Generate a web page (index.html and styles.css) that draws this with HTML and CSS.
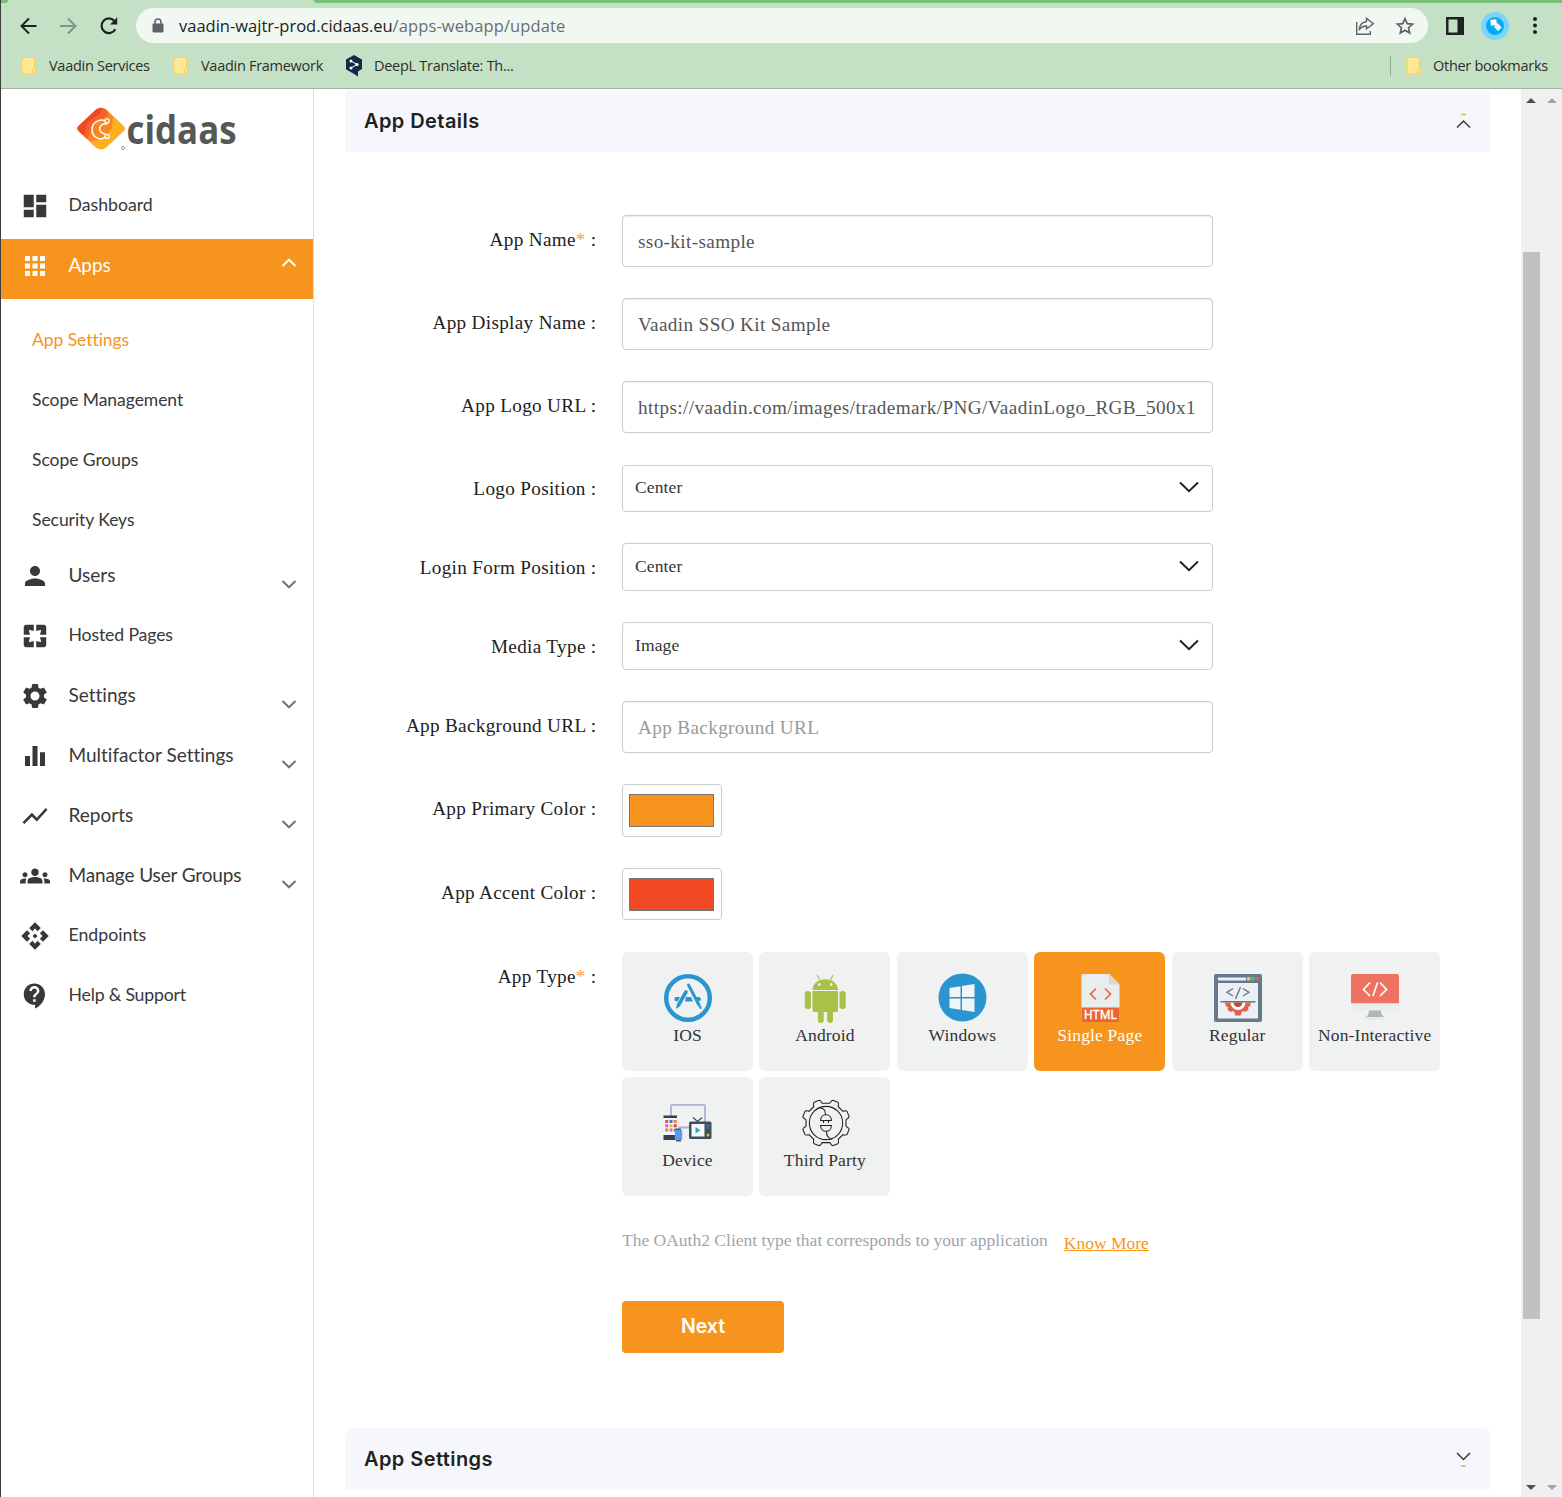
FILE: index.html
```html
<!DOCTYPE html>
<html lang="en">
<head>
<meta charset="utf-8">
<title>cidaas - App Settings</title>
<link rel="stylesheet" href="styles.css">
</head>
<body>
<header class="browser">
  <div class="tab-strip"><span class="tab-left"></span><span class="tab-right"></span></div>
  <div class="toolbar">
    <svg class="tool" width="18" height="18" viewBox="0 0 18 18" fill="none" stroke="#202124" stroke-width="2"><path d="M17.500 9H2.500M10 1.500L2.500 9 10 16.500"/></svg>
    <svg class="tool forward" width="18" height="18" viewBox="0 0 18 18" fill="none" stroke="#80957f" stroke-width="2"><path d="M1 9h15M9 1.500L16.500 9 9 16.500"/></svg>
    <svg class="tool reload" width="20" height="20" viewBox="0 0 20 20"><path d="M16.300 13.200A7.300 7.300 0 1 1 15.300 4.900" fill="none" stroke="#202124" stroke-width="2.200"/><path d="M18.200 1.200v7.200H11z" fill="#202124"/></svg>
    <div class="omnibox">
      <svg width="12" height="16" viewBox="0 0 12 16"><path d="M3 6V4a3 3 0 0 1 6 0v2" fill="none" stroke="#5f6368" stroke-width="1.600"/><rect x=".5" y="5.500" width="11" height="9" rx="1.300" fill="#5f6368"/></svg>
      <span class="url"><span>vaadin-wajtr-prod.cidaas.eu</span><span class="url-path">/apps-webapp/update</span></span>
      <svg class="share" width="20" height="20" viewBox="0 0 20 20" fill="none" stroke="#5f6368" stroke-width="1.400"><path d="M1.700 6v12.300h13.600V15"/><path d="M11.500 2.300L18.300 7.800 11.500 12.800V10C8 10 6 11 4 14c.6-5 3.300-8 7.500-8.500z"/></svg>
      <svg width="20" height="20" viewBox="0 0 20 20" fill="none" stroke="#5f6368" stroke-width="1.700"><path d="M10 2.600l2.200 5 5.400.5-4.100 3.600 1.200 5.300-4.700-2.800L5.300 17l1.200-5.300L2.400 8.100l5.400-.5z"/></svg>
    </div>
    <svg class="side-panel" width="18" height="18" viewBox="0 0 18 18"><path d="M0 0h18v18H0z" fill="#202124"/><path d="M2.500 2.500h9v13h-9z" fill="#c5e1c5"/></svg>
    <svg class="profile" width="28" height="28" viewBox="0 0 28 28"><circle cx="14" cy="14" r="14" fill="#7bd5fb"/><circle cx="14" cy="14" r="9" fill="#06a9f4"/><path d="M9.300 8l6-.8.7 5.800-6 .7z" fill="#fff"/><path d="M13 14.700l3.700-3.700 4 4.500-3.700 3.700z" fill="#e4f4fc"/></svg>
    <svg class="kebab" width="6" height="18" viewBox="0 0 6 18" fill="#202124"><circle cx="3" cy="2" r="2"/><circle cx="3" cy="8.500" r="2"/><circle cx="3" cy="15" r="2"/></svg>
  </div>
  <div class="bookmarks">
    <svg class="folder" width="17" height="20" viewBox="0 0 17 20"><path d="M1 1.500h12.500v11.500h1v5H1z" fill="#ffe794" stroke="#f8d45c" stroke-width="1.200"/><path d="M11.500 18v-5h3v4.500z" fill="#ffe794" stroke="#f8d45c"/></svg>
    <span class="bm bm-1">Vaadin Services</span>
    <svg class="folder" width="17" height="20" viewBox="0 0 17 20"><path d="M1 1.500h12.500v11.500h1v5H1z" fill="#ffe794" stroke="#f8d45c" stroke-width="1.200"/><path d="M11.500 18v-5h3v4.500z" fill="#ffe794" stroke="#f8d45c"/></svg>
    <span class="bm bm-2">Vaadin Framework</span>
    <svg class="deepl" width="16" height="23" viewBox="0 0 16 23"><path d="M8 1l8 4.500v9.500l-4 2.500v5L8 20 0 15.300V5.500z" fill="#0f2b46"/><path d="M5 7l6 3.500L5 14" fill="none" stroke="#fff" stroke-width="1"/><circle cx="5" cy="7" r="1.500" fill="#fff"/><circle cx="11" cy="10.500" r="1.600" fill="#fff"/><circle cx="5" cy="14" r="1.500" fill="#fff"/></svg>
    <span class="bm bm-3">DeepL Translate: Th...</span>
    <span class="divider"></span>
    <svg class="folder" width="17" height="20" viewBox="0 0 17 20"><path d="M1 1.500h12.500v11.500h1v5H1z" fill="#ffe794" stroke="#f8d45c" stroke-width="1.200"/><path d="M11.500 18v-5h3v4.500z" fill="#ffe794" stroke="#f8d45c"/></svg>
    <span class="bm bm-4">Other bookmarks</span>
  </div>
</header>

<div class="page">
  <nav class="sidebar">
    <svg class="logo" width="164" height="46" viewBox="0 0 164 46">
      <defs><clipPath id="gem"><path d="M20 3.500Q25 0 30 3.500L47 19.500Q50.500 22.500 47 25.500L30 41.500Q25 45 20 41.500L3 25.500Q-.5 22.500 3 19.500z"/></clipPath></defs>
      <g clip-path="url(#gem)"><path d="M0 0h50v46H0z" fill="#f9861f"/><path d="M0 0h27l-2 7-9 9-4 12-6 8-6-8z" fill="#f04a23"/><path d="M27 0l8 0-4 10-14 8-5 14-6 4 6-20 13-9z" fill="#f2652a"/><path d="M37 9l14 14-26 24-13-11 10-2 8-4 6-8z" fill="#fdb01f"/></g>
      <path d="M29 15.500c-3-3-13-.5-13 8s9 11.500 13 7.500" fill="none" stroke="#fff" stroke-width="1.500"/>
      <path d="M31.500 18c-9-2-11 9-2 10" fill="none" stroke="#fff" stroke-width="1.500"/><circle cx="31" cy="15" r="2.100" fill="none" stroke="#fff" stroke-width="1.300"/><circle cx="31" cy="30.500" r="2.100" fill="none" stroke="#fff" stroke-width="1.300"/>
      <circle cx="47" cy="42" r="1.500" fill="none" stroke="#999"/>
      <text x="50.500" y="38" textLength="110" lengthAdjust="spacingAndGlyphs" class="logo-text">cidaas</text>
    </svg>
    <a class="item small"><svg class="ico" viewBox="0 0 24 24"><path d="M3 13h8V3H3v10zm0 8h8v-6H3v6zm10 0h8V11h-8v10zm0-18v6h8V3h-8z"/></svg><span>Dashboard</span></a>
    <a class="item active"><svg class="ico" viewBox="0 0 24 24"><path d="M4 8h4V4H4v4zm6 12h4v-4h-4v4zm-6 0h4v-4H4v4zm0-6h4v-4H4v4zm6 0h4v-4h-4v4zm6-10v4h4V4h-4zm-6 4h4V4h-4v4zm6 6h4v-4h-4v4zm0 6h4v-4h-4v4z"/></svg><span>Apps</span><svg class="chev up" viewBox="0 0 16 10"><path d="M1.500 8L8 1.700 14.500 8"/></svg></a>
    <div class="subnav">
      <a class="current"><span>App Settings</span></a>
      <a><span>Scope Management</span></a>
      <a><span>Scope Groups</span></a>
      <a><span>Security Keys</span></a>
    </div>
    <a class="item"><svg class="ico" viewBox="0 0 24 24"><path d="M12 12c2.210 0 4-1.790 4-4s-1.790-4-4-4-4 1.790-4 4 1.790 4 4 4zm0 2c-2.670 0-8 1.340-8 4v2h16v-2c0-2.660-5.330-4-8-4z"/></svg><span>Users</span><svg class="chev" viewBox="0 0 16 10"><path d="M1.500 2L8 8.300 14.500 2"/></svg></a>
    <a class="item small hosted"><svg class="ico" viewBox="0 0 24 24"><path d="M3 5v6h5L7 7l4 1V3H5c-1.100 0-2 .9-2 2zm5 8H3v6c0 1.100.9 2 2 2h6v-5l-4 1 1-4zm9 4l-4-1v5h6c1.100 0 2-.9 2-2v-6h-5l1 4zm2-14h-6v5l4-1-1 4h5V5c0-1.100-.9-2-2-2z"/></svg><span>Hosted Pages</span></a>
    <a class="item"><svg class="ico" viewBox="0 0 24 24"><path d="M19.140 12.940c.04-.3.060-.61.060-.94 0-.32-.02-.64-.07-.94l2.030-1.580c.18-.14.230-.41.120-.61l-1.920-3.320c-.12-.22-.37-.29-.59-.22l-2.390.96c-.5-.38-1.030-.7-1.620-.94l-.36-2.540c-.04-.24-.24-.41-.48-.41h-3.840c-.24 0-.43.170-.47.410l-.36 2.540c-.59.240-1.130.570-1.620.94l-2.390-.96c-.22-.08-.47 0-.59.220L2.740 8.870c-.12.210-.08.470.12.610l2.030 1.580c-.05.3-.09.630-.09.940s.02.640.070.940l-2.030 1.580c-.18.140-.23.410-.12.610l1.920 3.320c.12.220.37.290.59.220l2.390-.96c.5.380 1.030.7 1.620.94l.36 2.540c.05.240.24.410.48.410h3.840c.24 0 .44-.17.470-.41l.36-2.540c.59-.24 1.130-.56 1.620-.94l2.390.96c.22.080.47 0 .59-.22l1.920-3.320c.12-.22.070-.47-.12-.61l-2.010-1.580zM12 15.600c-1.980 0-3.600-1.620-3.600-3.600s1.620-3.600 3.600-3.600 3.600 1.620 3.600 3.600-1.620 3.600-3.600 3.600z"/></svg><span>Settings</span><svg class="chev" viewBox="0 0 16 10"><path d="M1.500 2L8 8.300 14.500 2"/></svg></a>
    <a class="item"><svg class="ico" viewBox="0 0 24 24"><path d="M10 20h4V4h-4v16zm-6 0h4v-8H4v8zM16 9v11h4V9h-4z"/></svg><span>Multifactor Settings</span><svg class="chev" viewBox="0 0 16 10"><path d="M1.500 2L8 8.300 14.500 2"/></svg></a>
    <a class="item"><svg class="ico" viewBox="0 0 24 24"><path d="M3.500 18.490l6-6.010 4 4L22 6.920l-1.410-1.410-7.090 7.970-4-4L2 16.990z"/></svg><span>Reports</span><svg class="chev" viewBox="0 0 16 10"><path d="M1.500 2L8 8.300 14.500 2"/></svg></a>
    <a class="item groups"><svg class="ico" viewBox="0 0 24 24"><path d="M12 12.750c1.630 0 3.070.39 4.240.9 1.080.48 1.760 1.560 1.760 2.730V18H6v-1.610c0-1.180.68-2.260 1.760-2.730 1.170-.52 2.610-.91 4.240-.91zM4 13c1.100 0 2-.9 2-2s-.9-2-2-2-2 .9-2 2 .9 2 2 2zm1.130 1.100c-.37-.06-.74-.1-1.130-.1-.99 0-1.930.21-2.780.58C.48 14.900 0 15.620 0 16.430V18h4.500v-1.610c0-.83.23-1.610.63-2.290zM20 13c1.100 0 2-.9 2-2s-.9-2-2-2-2 .9-2 2 .9 2 2 2zm4 3.430c0-.81-.48-1.530-1.220-1.850-.85-.37-1.790-.58-2.780-.58-.39 0-.76.040-1.130.1.400.68.630 1.460.63 2.290V18H24v-1.570zM12 6c1.660 0 3 1.340 3 3s-1.340 3-3 3-3-1.340-3-3 1.340-3 3-3z"/></svg><span>Manage User Groups</span><svg class="chev" viewBox="0 0 16 10"><path d="M1.500 2L8 8.300 14.500 2"/></svg></a>
    <a class="item small"><svg class="ico" viewBox="0 0 24 24"><path d="M14 12l-2 2-2-2 2-2 2 2zm-2-6l2.120 2.120 2.500-2.500L12 1 7.380 5.620l2.500 2.500L12 6zm-6 6l2.120-2.120-2.500-2.500L1 12l4.620 4.620 2.500-2.500L6 12zm12 0l-2.120 2.120 2.500 2.500L23 12l-4.620-4.620-2.500 2.500L18 12zm-6 6l-2.120-2.120-2.500 2.500L12 23l4.620-4.620-2.500-2.500L12 18z"/></svg><span>Endpoints</span></a>
    <a class="item small help"><svg class="ico" viewBox="0 0 24 24"><path d="M11.500 2C6.810 2 3 5.810 3 10.500S6.810 19 11.500 19h.5v3c4.860-2.340 8-7 8-11.500C20 5.810 16.190 2 11.500 2zm1 14.500h-2v-2h2v2zm0-3.500h-2c0-3.250 3-3 3-5 0-1.100-.9-2-2-2s-2 .9-2 2h-2c0-2.210 1.790-4 4-4s4 1.790 4 4c0 2.500-3 2.750-3 5z"/></svg><span>Help &amp; Support</span></a>
  </nav>

  <main class="content">
    <section class="panel-head">
      <h2>App Details</h2>
      <svg width="16" height="18" viewBox="0 0 16 18" fill="none"><path d="M5 2.500h5" stroke="#b4d253" stroke-width="1.600"/><path d="M1 15.500L7.500 9 14 15.500" stroke="#3a3a3a" stroke-width="1.500"/></svg>
    </section>
    <form class="form">
      <div class="row"><label>App Name<i>*</i> :</label><div class="field">sso-kit-sample</div></div>
      <div class="row"><label>App Display Name :</label><div class="field">Vaadin SSO Kit Sample</div></div>
      <div class="row"><label>App Logo URL :</label><div class="field"><div class="clip"><span>https://vaadin.com/images/trademark/PNG/VaadinLogo_RGB_500x155.png</span></div></div></div>
      <div class="row select-row first"><label>Logo Position :</label><div class="field select"><span>Center</span><svg width="20" height="12" viewBox="0 0 20 12"><path d="M1 1.500l9 8.700 9-8.700"/></svg></div></div>
      <div class="row select-row"><label>Login Form Position :</label><div class="field select"><span>Center</span><svg width="20" height="12" viewBox="0 0 20 12"><path d="M1 1.500l9 8.700 9-8.700"/></svg></div></div>
      <div class="row select-row"><label>Media Type :</label><div class="field select"><span>Image</span><svg width="20" height="12" viewBox="0 0 20 12"><path d="M1 1.500l9 8.700 9-8.700"/></svg></div></div>
      <div class="row"><label>App Background URL :</label><div class="field placeholder">App Background URL</div></div>
      <div class="row color-row"><label>App Primary Color :</label><div class="field swatch tall"><b class="primary"></b></div></div>
      <div class="row color-row"><label>App Accent Color :</label><div class="field swatch"><b class="accent"></b></div></div>
      <div class="row type-row"><label>App Type<i>*</i> :</label>
        <div class="tiles">
          <div class="tile"><svg viewBox="0 0 48 48"><circle cx="24" cy="24" r="21.800" fill="none" stroke="#2a95d0" stroke-width="4.400"/><g stroke="#2a95d0" stroke-linecap="round" fill="none"><path d="M22 18l-7.500 13" stroke-width="3.600"/><path d="M24.500 11L35 31" stroke-width="3"/><path d="M13 33.500l.7-1.200M36 32.500l.7 1.500" stroke-width="2"/></g><path d="M11 23h5l-2.500 4.500H13q-2.500 0-2.500-2zM22 23h5l2 4.500h-8zM32 23h3.500q2 1.500 1.500 3.500l-2.500.5z" fill="#2a95d0"/></svg><span>IOS</span></div>
          <div class="tile"><svg viewBox="0 0 48 48" fill="#a9c146"><path d="M11.500 16C11.500 1.500 37 1.500 37 16z"/><path d="M11.500 17H37v19.500q0 1.500-2 1.500h-3v8a2.900 2.900 0 0 1-5.800 0v-8h-3.500v8a2.900 2.900 0 0 1-5.800 0v-8h-3.400q-2 0-2-1.500z"/><rect x="3.800" y="17" width="6.200" height="18" rx="3.100"/><rect x="38.500" y="17" width="6.200" height="18" rx="3.100"/><path d="M19 6l-3-5M29.500 6l2.500-5" stroke="#a9c146" stroke-width="1.100"/><circle cx="18.300" cy="10.500" r="1.200" fill="#fff"/><circle cx="30.200" cy="10.500" r="1.200" fill="#fff"/></svg><span>Android</span></div>
          <div class="tile"><svg viewBox="0 0 48 48"><circle cx="24.500" cy="23.500" r="24" fill="#2a95d0"/><path d="M11.500 14l11-1.700V23h-11zM24 12l12.500-2v13H24zM11.500 24.500h11v11.200l-11-1.700zM24 24.500h12.500V38L24 36z" fill="#f2f5f5"/></svg><span>Windows</span></div>
          <div class="tile selected"><svg class="nudge" viewBox="0 0 48 48"><path d="M7 0h26.500l10 10.500V48H7q-1.500 0-1.500-1.500v-45Q5.500 0 7 0z" fill="#e9edee"/><path d="M33 0l10.500 10.500H33z" fill="#d8d8cb"/><path d="M5.500 33.500h38V48h-38z" fill="#ea6530"/><path d="M20 14.500l-5.500 5.500 5.500 5.500M29 14.500l5.500 5.500-5.500 5.500" fill="none" stroke="#ea6530" stroke-width="1.700"/><text x="8" y="45.200" textLength="33" class="html-text">HTML</text></svg><span>Single Page</span></div>
          <div class="tile"><svg class="nudge" viewBox="0 0 48 48"><rect width="48" height="48" rx="2" fill="#64798a"/><path d="M4 3.500h28v3H4zM4 9h40v35.500H4z" fill="#eceff3"/><path d="M33 3h3.500v3.500H33z" fill="#f0c94d"/><path d="M37.200 3h3.500v3.500h-3.500z" fill="#4fba93"/><path d="M41.500 3H45v3.500h-3.500z" fill="#e5614f"/><path d="M11 28.500h26l-1 4-2 .5.500 3-3.500 2-2-1-1.500 1.500-.8 3h-5.400l-.8-3L19 37l-2 1-3.500-2 .5-3-2-.5z" fill="#e5614f"/><path d="M16.500 28.500h15a7.500 7.500 0 0 1-15 0z" fill="#fff"/><path d="M19.500 28.500h9a4.500 4.500 0 0 1-9 0z" fill="#c74738"/><path d="M6.500 27.800h35" stroke="#64798a" stroke-width="1.400"/><path d="M19 14.500l-6 3.800 6 3.700M29 14.500l6 3.800-6 3.700M26.500 13l-5 12" fill="none" stroke="#64798a" stroke-width="1.400"/></svg><span>Regular</span></div>
          <div class="tile"><svg class="nudge" viewBox="0 0 48 48"><path d="M2 0h44q2 0 2 2v27.500H0V2Q0 0 2 0z" fill="#ee7161"/><path d="M0 29.500h48V34q0 2.500-2 2.500H2Q0 36.500 0 34z" fill="#e8edee"/><path d="M18 36.500h12q0 4 3 6.500H15q3-2.500 3-6.500z" fill="#b0b5bb"/><path d="M14 43h20v3H14z" fill="#e5ecf0"/><path d="M19 8.500L12.500 15.500 19 22M29 8.500l6.500 7-6.500 6.500M26.500 8.500l-4.500 13.500" fill="none" stroke="#fff" stroke-width="1.700"/></svg><span>Non-Interactive</span></div>
          <div class="tile"><svg viewBox="0 0 48 48"><g transform="translate(-.5 1)"><path d="M7.500 17V6q0-1.200 1.200-1.200h31.600q1.200 0 1.200 1.200v17M15 27.500h12" fill="none" stroke="#a9b4d5" stroke-width="1.800"/><path d="M0 17h13.500v23H0z" fill="#f4f5f8"/><path d="M0 15.500h13.500V18H0zM0 35h13.500v5H0z" fill="#35404e"/><path d="M1.700 20h3v3h-3z" fill="#ef4b50"/><path d="M6 20h3v3H6z" fill="#3b7bd4"/><path d="M10.200 20h3v3h-3z" fill="#ef7a3d"/><path d="M1.700 24.300h3v3h-3z" fill="#b36be0"/><path d="M6 24.300h3v3H6z" fill="#f5b535"/><path d="M10.200 24.300h3v3h-3z" fill="#df3c50"/><path d="M1.700 28.500h3v3h-3z" fill="#ef7a3d"/><path d="M6 28.500h3v3H6z" fill="#c577cc"/><path d="M10.200 28.500h3v3h-3z" fill="#3b9f76"/><path d="M12.500 28.500h5v13h-5z" fill="#4b5563"/><rect x="11.300" y="30" width="7.400" height="10" rx="1" fill="#5a9bf0"/><path d="M29.500 17.500l4.500 4 4.500-4" fill="none" stroke="#39505e" stroke-width="1.300"/><rect x="25.500" y="21.500" width="22.500" height="17.500" rx="1.500" fill="#39505e"/><rect x="28" y="24" width="13" height="12.500" fill="#f7f7f7"/><path d="M32 27l5 3.200-5 3.300z" fill="#22a7d8"/><path d="M43 25.500h3M43 28h3" stroke="#6c8290"/><circle cx="44.500" cy="35" r="1.500" fill="#f1b544"/></g></svg><span>Device</span></div>
          <div class="tile"><svg class="gear" viewBox="-.5 -.5 49 49" fill="none" stroke="#222" stroke-width="1.100"><path d="M20 3.800h8c1-1 1-3.200 3-3.100l5 2.100c1.700 1 .4 2.900.5 4.600l4.600 4.500c1.700.1 3.600-1.200 4.500.5l2 5c.1 2-2.400 2-3.200 3.300v6.600c.8 1.200 3.300 1.200 3.200 3.200l-2 5c-1 1.700-2.900.4-4.500.5l-4.600 4.600c-.1 1.600 1.200 3.500-.5 4.500l-5 2c-2 .1-2-2-3-3.100h-8c-1 1.100-1 3.200-3 3.100l-5-2c-1.700-1-.4-2.900-.5-4.500l-4.600-4.600c-1.600-.1-3.500 1.200-4.500-.5l-2-5c-.1-2 2.400-2 3.200-3.200v-6.600C2.800 19.400.3 19.400.4 17.400l2-5c1-1.700 2.900-.4 4.500-.5l4.600-4.500c.1-1.700-1.200-3.600.5-4.600l5-2.100c2-.1 2 2.100 3 3.100z"/><circle cx="24" cy="24" r="17"/><path d="M17 8.500c5 0 6.500 3 6.500 7M24.500 33c0 4 1.500 6.500 5.500 7.500M18.500 21.500c0-8 11-8 11 0zM18.500 26.500c0 8 11 8 11 0zM21.500 21.500V24M26.500 21.500V24"/></svg><span>Third Party</span></div>
        </div>
      </div>
      <div class="hint"><span>The OAuth2 Client type that corresponds to your application</span><a>Know More</a></div>
      <button type="button" class="next">Next</button>
    </form>
    <section class="panel-head lower">
      <h2>App Settings</h2>
      <svg width="16" height="18" viewBox="0 0 16 18" fill="none"><path d="M5 16h5" stroke="#b4d253" stroke-width="1.600"/><path d="M1 3l6.500 6.500L14 3" stroke="#3a3a3a" stroke-width="1.500"/></svg>
    </section>
  </main>

  <aside class="scrollbars">
    <div class="track"><svg viewBox="0 0 10 5" fill="#505050"><path d="M0 5l5-5 5 5z"/></svg><span class="thumb"></span><svg viewBox="0 0 10 5" fill="#505050"><path d="M0 0l5 5 5-5z"/></svg></div>
    <div class="track idle"><svg viewBox="0 0 10 5" fill="#a3a3a3"><path d="M0 5l5-5 5 5z"/></svg><svg viewBox="0 0 10 5" fill="#a3a3a3"><path d="M0 0l5 5 5-5z"/></svg></div>
  </aside>
</div>
</body>
</html>
```
FILE: styles.css
```css
* { box-sizing: border-box; }
body {
  margin: 0;
  height: 1497px;
  overflow: hidden;
  display: flex;
  flex-direction: column;
  border-left: 1px solid #3c3c3c;
  background: #fff;
  color: #222;
  font-family: "Liberation Serif", serif;
}
svg { display: block; flex: none; }
span, h2, label, a { white-space: nowrap; }

/* browser chrome */
.browser {
  height: 89px;
  flex: none;
  background: #c5e1c5;
  border-bottom: 1px solid #9fb59f;
  font-family: "Open Sans", sans-serif;
}
.tab-strip { height: 3px; display: flex; justify-content: space-between; }
.tab-left { width: 7px; background: #79bd7b; border-bottom-right-radius: 6px; }
.tab-right { width: 1248px; background: #79bd7b; border-bottom-left-radius: 6px; }
.toolbar { height: 45px; display: flex; align-items: center; padding-left: 18px; }
.forward { margin-left: 22px; }
.reload { margin-left: 22px; }
.omnibox {
  width: 1292px;
  height: 35px;
  margin-left: 17px;
  padding: 0 13px 0 16px;
  display: flex;
  align-items: center;
  border-radius: 18px;
  background: #f1f8f1;
}
.url { margin-left: 15px; font-size: 16.5px; line-height: 24px; color: #202124; display: flex; }
.url-path { color: #6a6e71; letter-spacing: .1px; }
.share { margin: 0 20px 0 auto; }
.side-panel { margin-left: 18px; }
.profile { margin-left: 17px; }
.kebab { margin-left: 23px; }
.bookmarks { height: 35px; display: flex; align-items: center; padding: 0 13px 0 20px; }
.bm { font-size: 14.5px; line-height: 20px; letter-spacing: -.28px; color: #2b2f2b; }
.bm-1 { margin: 0 22px 0 11px; width: 102px; }
.bm-2 { margin: 0 22px 0 11px; width: 123px; }
.bm-3 { margin-left: 12px; }
.bm-4 { margin-left: 10px; width: 116px; }
.divider { width: 1px; height: 20px; margin: 0 15px 0 auto; background: #93ad93; }

.page { flex: 1; display: flex; min-height: 0; }

/* navigation */
.sidebar {
  width: 313px;
  flex: none;
  border-right: 1px solid #dcdcdc;
  font-family: Lato, sans-serif;
  font-variant-ligatures: none;
  color: #383838;
}
.logo { margin: 17px 0 27px 75px; overflow: visible; }
.logo-text { font: 700 39px "Open Sans", sans-serif; fill: #575756; }
.item { height: 60px; display: flex; align-items: flex-start; padding: 12px 16px 0 19px; font-size: 19px; line-height: 28px; }
.small { font-size: 17.7px; line-height: 27px; }
.hosted { letter-spacing: -.15px; }
.groups { letter-spacing: -.12px; }
.help { letter-spacing: -.2px; }
.ico { width: 30px; height: 30px; fill: #383838; margin-right: 18.500px; }
.chev { width: 16px; height: 10px; margin: 18px 0 0 auto; fill: none; stroke: #737373; stroke-width: 2; }
.chev.up { margin-top: 7px; stroke: #fff; }
.item.active { background: #f7941e; color: #fff; }
.item.active .ico { fill: #fff; }
.subnav { height: 250px; padding: 11px 0 0 31px; }
.subnav a { height: 60px; display: flex; align-items: center; font-size: 17.5px; line-height: 24px; letter-spacing: -.05px; }
.subnav .current { color: #f7941e; }

/* main column */
.content { flex: 1; padding: 1px 31px 0 31px; }
.panel-head {
  height: 62px;
  padding: 0 18px 0 19px;
  display: flex;
  align-items: center;
  justify-content: space-between;
  background: #f6f7fd;
  border-radius: 6px 6px 0 0;
}
.panel-head h2 { margin: 0; font: 600 20px/24px Inter, sans-serif; letter-spacing: .42px; color: #212121; }
.form { padding-top: 63px; height: 1276px; display: flex; flex-direction: column; align-items: flex-start; }
.row { height: 83px; flex: none; display: flex; align-items: flex-start; }
.row label {
  width: 277px;
  padding: 13px 25.5px 0 0;
  text-align: right;
  font-size: 19.2px;
  line-height: 24px;
  letter-spacing: .32px;
  color: #212121;
}
.row label i { font-style: normal; color: #f9a13a; }
.field {
  width: 591px;
  height: 52px;
  padding: 2px 15px 0;
  display: flex;
  align-items: center;
  border: 1px solid #ccc;
  border-radius: 4px;
  box-shadow: inset 0 1px 1px rgba(0, 0, 0, .075);
  font-size: 19.2px;
  line-height: 24px;
  letter-spacing: .36px;
  color: #555;
}
.clip { width: 559px; overflow: hidden; letter-spacing: .39px; }
.placeholder { color: #999; }
.select-row { height: 79px; }
.select { height: 48px; padding: 0 13px 2px 12px; justify-content: space-between; box-shadow: none; font-size: 17.5px; letter-spacing: .12px; color: #333; }
.select svg { fill: none; stroke: #222; stroke-width: 2; }
.first .select { height: 47px; margin-top: 1px; padding-bottom: 3px; }
.color-row { height: 84px; }
.swatch { width: 100px; padding: 1px 6px 0; box-shadow: none; }
.tall { height: 53px; padding-top: 0; }
.swatch b { width: 85px; height: 33px; border: 1px solid #767676; }
.primary { background: #f7941e; }
.accent { background: #f04923; }
.type-row { height: 244px; }
.tiles { display: grid; grid-template-columns: repeat(6, 131px); gap: 6px 6.450px; }
.tile {
  height: 119px;
  padding-top: 22px;
  display: flex;
  flex-direction: column;
  align-items: center;
  border-radius: 6px;
  background: #f0f2f1;
  font-size: 17.5px;
  line-height: 24px;
  letter-spacing: .18px;
  color: #333;
}
.tile svg { width: 48px; height: 48px; overflow: visible; }
.tile .nudge { margin-left: 1px; }
.tile .gear { margin-left: 3px; }
.tile span { margin-top: 1px; }
.tile.selected { background: #f7941e; color: #fff; }
.html-text { font: 12px Roboto, sans-serif; letter-spacing: 0; fill: #fff; stroke: #fff; stroke-width: .3px; }
.hint { margin: 32px 0 0 277px; display: flex; font-size: 17.5px; line-height: 24px; color: #a1a5ab; }
.hint a { margin: 3px 0 0 16px; color: #f7941e; text-decoration: underline; }
.next {
  width: 162px;
  height: 52px;
  margin: 46px 0 0 277px;
  padding: 0 0 2px;
  border: 0;
  border-radius: 4px;
  background: #f7941e;
  color: #fff;
  font: 600 19.5px/24px Inter, sans-serif;
}

/* scrollbars */
.scrollbars { width: 41px; display: flex; background: #f0f0f0; }
.track { width: 21px; display: flex; flex-direction: column; align-items: center; justify-content: space-between; padding: 9px 0 7px; }
.track svg { width: 10px; height: 5px; }
.thumb { width: 17px; height: 1067px; margin: 149px 0 auto 0; background: #c1c1c1; }
```
